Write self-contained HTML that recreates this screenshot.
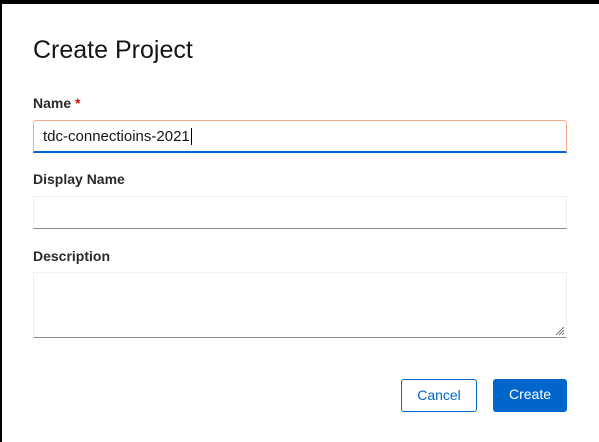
<!DOCTYPE html>
<html><head><style>
body{margin:0;width:599px;height:442px;background:#000;overflow:hidden;font-family:"Liberation Sans",sans-serif;position:relative}
.d{position:absolute;left:2px;top:4px;right:0;bottom:0;background:#fff}
h1{position:absolute;left:33px;top:36px;margin:0;font-size:25px;font-weight:400;color:#151515}
.l{position:absolute;left:33px;font-size:14px;font-weight:bold;color:#2a2a2a}
.i{position:absolute;left:33px;width:534px;border:1px solid #f0f0f0;border-bottom-color:#8a8d90;background:#fff;box-sizing:border-box}
.b{position:absolute;top:379px;height:33px;box-sizing:border-box;border-radius:3px;font-size:14px;text-align:center;line-height:31px}
</style></head><body>
<div class="d"></div>
<h1>Create Project</h1>
<div class="l" style="top:95px">Name <span style="color:#c9190b">*</span></div>
<div class="i" style="top:120px;height:33px;border-color:#f0ab8f;border-bottom:2px solid #06c;border-radius:3px 3px 0 0;font-size:15px;padding-left:9px;line-height:31px;color:#151515">tdc-connectioins-2021<span style="border-left:1px solid #000;margin-left:1px"></span></div>
<div class="l" style="top:171px">Display Name</div>
<div class="i" style="top:196px;height:33px"></div>
<div class="l" style="top:248px">Description</div>
<div class="i" style="top:272px;height:66px">
<svg width="10" height="10" style="position:absolute;right:1px;bottom:1px"><path d="M9 1L1 9M9 4L4 9M9 7L7 9" stroke="#777" stroke-width="1"/></svg></div>
<div class="b" style="left:401px;width:76px;border:1px solid #06c;color:#06c">Cancel</div>
<div class="b" style="left:493px;width:74px;background:#06c;color:#fff">Create</div>
</body></html>
